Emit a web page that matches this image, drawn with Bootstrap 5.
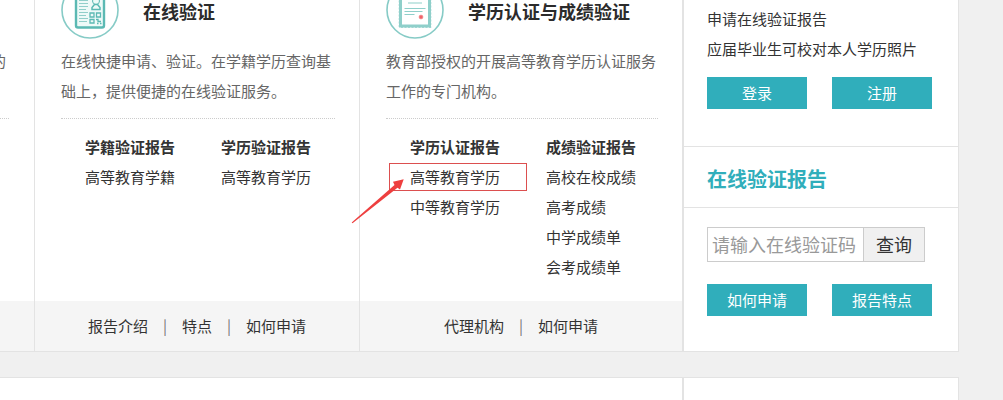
<!DOCTYPE html>
<html lang="zh-CN">
<head>
<meta charset="utf-8">
<meta name="viewport" content="width=device-width, initial-scale=1">
<title>在线验证</title>
<link rel="stylesheet" href="https://cdn.jsdelivr.net/npm/bootstrap@5.3.0/dist/css/bootstrap.min.css">
<style>
:root { --teal: #30aebb; --line: #e3e3e3; }
body { background: #f0f0f0; color: #333; font: 15px/30px "Noto Sans CJK SC", sans-serif; overflow-x: hidden; }
a { color: inherit; text-decoration: none; }
.page-wrap { padding-right: 44px; }
.panel { background: #fff; border-bottom: 1px solid var(--line); }
.panel-next { border-top: 1px solid var(--line); border-bottom: 0; min-height: 23px; margin-top: 25px; }
.service { border-right: 1px solid var(--line); min-width: 0; }
.service-edge { width: 35px; flex: none; }
.service-mid { flex: 1 1 325px; }
.service-last { flex: 1 1 322px; border-right: 0; }
.service-body { padding: 0 24px 19px 26px; }
.service-head { height: 39px; margin-bottom: 7px; gap: 24px; }
.service-head svg { flex: none; }
.service-head h2 { font-size: 18px; line-height: 22px; font-weight: 700; color: #2b2b2b; margin: 0 0 17px; white-space: nowrap; }
.intro { color: #666; margin: 0; padding-bottom: 12px; border-bottom: 1px dotted #ccc; }
.lists { padding: 13px 0 0 24px; gap: 46px; }
.lists h3 { font-size: 15px; line-height: 30px; font-weight: 700; margin: 0; white-space: nowrap; }
.lists li { white-space: nowrap; }
.service-foot { background: #f5f5f5; height: 50px; gap: 15px; }
.service-foot .bar { color: #777; }
.edge-text { color: #666; padding-right: 28px; white-space: nowrap; direction: rtl; overflow: hidden; }
.edge-rule { margin: 0 25px 0 0; padding-top: 42px; border-bottom: 1px dotted #ccc; }
.marked { position: relative; }
.marker { position: absolute; left: -59px; top: 1px; pointer-events: none; }
.side { width: 277px; flex: none; border-left: 2px solid var(--line); border-right: 1px solid var(--line); }
.side-block { padding: 0 23px; }
.side h2 { font-size: 20px; line-height: 56px; font-weight: 700; color: var(--teal); margin: 0; padding: 4px 23px 0; border: solid var(--line); border-width: 1px 0; }
.btn-teal, .btn-teal:hover { background: var(--teal); color: #fff; border: 0; border-radius: 0; width: 100px; height: 32px; padding: 0; font-size: 15px; line-height: 32px; }
.pair { gap: 25px; }
.pair-login { padding: 13px 0 37px; }
.code-form { padding: 19px 0 22px; }
.code-form input { width: 156px; height: 35px; border: 1px solid #ccc; border-right: 0; padding: 0 4px 2px; font-size: 18px; border-radius: 0; }
.code-form input::placeholder { color: #999; opacity: 1; }
.code-form button { width: 62px; height: 35px; border: 1px solid #ccc; background: #f0f0f0; color: #333; font-size: 18px; line-height: 30px; padding: 0 0 2px; }
</style>
</head>
<body>
<div class="page-wrap">
  <div class="panel d-flex">
    <main class="d-flex flex-grow-1 overflow-hidden">
      <section class="service service-edge d-flex flex-column">
        <div class="flex-grow-1">
          <div class="service-head"></div>
          <p class="edge-text m-0">的</p>
          <div class="edge-rule"></div>
        </div>
        <div class="service-foot"></div>
      </section>

      <section class="service service-mid d-flex flex-column">
        <div class="service-body flex-grow-1">
          <div class="service-head d-flex align-items-end">
            <svg width="58" height="58" viewBox="0 0 58 58" fill="none" stroke="#5bb9b3" aria-hidden="true">
              <circle cx="29" cy="29" r="28" stroke="#86cbc6" stroke-width="1.6"/>
              <rect x="15" y="8" width="28" height="38.5" rx="2" fill="#eefaf8" stroke-width="2.4"/>
              <path d="M18 13.5h9M18 16.5h9M18 19.5h9M18 22.5h9M18 25.5h9M18 28.5h7M18 31.5h9M18 34.5h7M18 37.5h9M18 40.5h8" stroke="#91cfca"/>
              <circle cx="35" cy="20" r="3.5"/>
              <path d="M31 28.5v-2l2.5-3h3l2.5 3v2z" stroke-width="1.5"/>
              <path d="M29 32h4v4h-4zM35.500 32h4v4h-4zM29 38.500h4v3.500h-4zM35 38.500h2v2h3M36 42.500h1.500M39 42.500h1.500" stroke-width="1.3"/>
            </svg>
            <h2>在线验证</h2>
          </div>
          <p class="intro">在线快捷申请、验证。在学籍学历查询基础上，提供便捷的在线验证服务。</p>
          <div class="lists d-flex">
            <div>
              <h3>学籍验证报告</h3>
              <ul class="list-unstyled m-0"><li><a href="#">高等教育学籍</a></li></ul>
            </div>
            <div>
              <h3>学历验证报告</h3>
              <ul class="list-unstyled m-0"><li><a href="#">高等教育学历</a></li></ul>
            </div>
          </div>
        </div>
        <div class="service-foot d-flex justify-content-center align-items-center">
          <a href="#">报告介绍</a><span class="bar">|</span><a href="#">特点</a><span class="bar">|</span><a href="#">如何申请</a>
        </div>
      </section>

      <section class="service service-last d-flex flex-column">
        <div class="service-body flex-grow-1">
          <div class="service-head d-flex align-items-end">
            <svg width="58" height="58" viewBox="0 0 58 58" fill="none" stroke="#8fcfca" aria-hidden="true">
              <circle cx="29" cy="29" r="28" stroke="#86cbc6" stroke-width="1.6"/>
              <rect x="14.5" y="11" width="29" height="34" fill="#fff" stroke-width="3"/>
              <rect x="13.5" y="10" width="31" height="36" stroke-width="1.5" stroke-dasharray="2 1.5"/>
              <path d="M20 17h18M22 22h14M18.500 27.500h21M18.500 30.500h18M18.500 33.500h10" stroke-width="1.2"/>
              <circle cx="35" cy="36" r="2" fill="#ee6268" stroke="#f58f92" stroke-width=".6"/>
            </svg>
            <h2>学历认证与成绩验证</h2>
          </div>
          <p class="intro">教育部授权的开展高等教育学历认证服务工作的专门机构。</p>
          <div class="lists d-flex">
            <div>
              <h3>学历认证报告</h3>
              <ul class="list-unstyled m-0">
                <li class="marked"><a href="#">高等教育学历</a>
                  <svg class="marker" width="178" height="62" viewBox="0 0 178 62" aria-hidden="true">
                    <rect x="38.5" y=".5" width="137" height="27" fill="none" stroke="#dc4f4f"/>
                    <path d="M.7 59.500L43.500 22L42 18.800L52.700 16.300L49 26.500L46.500 24.800L1.500 60.200Z" fill="#ee3f3f"/>
                  </svg>
                </li>
                <li><a href="#">中等教育学历</a></li>
              </ul>
            </div>
            <div>
              <h3>成绩验证报告</h3>
              <ul class="list-unstyled m-0">
                <li><a href="#">高校在校成绩</a></li>
                <li><a href="#">高考成绩</a></li>
                <li><a href="#">中学成绩单</a></li>
                <li><a href="#">会考成绩单</a></li>
              </ul>
            </div>
          </div>
        </div>
        <div class="service-foot d-flex justify-content-center align-items-center">
          <a href="#">代理机构</a><span class="bar">|</span><a href="#">如何申请</a>
        </div>
      </section>
    </main>

    <aside class="side">
      <div class="side-block pt-1">
        <ul class="list-unstyled m-0">
          <li><a href="#">申请在线验证报告</a></li>
          <li><a href="#">应届毕业生可校对本人学历照片</a></li>
        </ul>
        <div class="pair pair-login d-flex">
          <button type="button" class="btn btn-teal">登录</button>
          <button type="button" class="btn btn-teal">注册</button>
        </div>
      </div>
      <h2>在线验证报告</h2>
      <div class="side-block">
        <form class="code-form d-flex">
          <input type="text" aria-label="在线验证码" placeholder="请输入在线验证码">
          <button type="button">查询</button>
        </form>
        <div class="pair d-flex">
          <button type="button" class="btn btn-teal">如何申请</button>
          <button type="button" class="btn btn-teal">报告特点</button>
        </div>
      </div>
    </aside>
  </div>

  <div class="panel panel-next d-flex">
    <div class="flex-grow-1"></div>
    <div class="side"></div>
  </div>
</div>
<script src="https://cdn.jsdelivr.net/npm/bootstrap@5.3.0/dist/js/bootstrap.bundle.min.js"></script>
</body>
</html>
